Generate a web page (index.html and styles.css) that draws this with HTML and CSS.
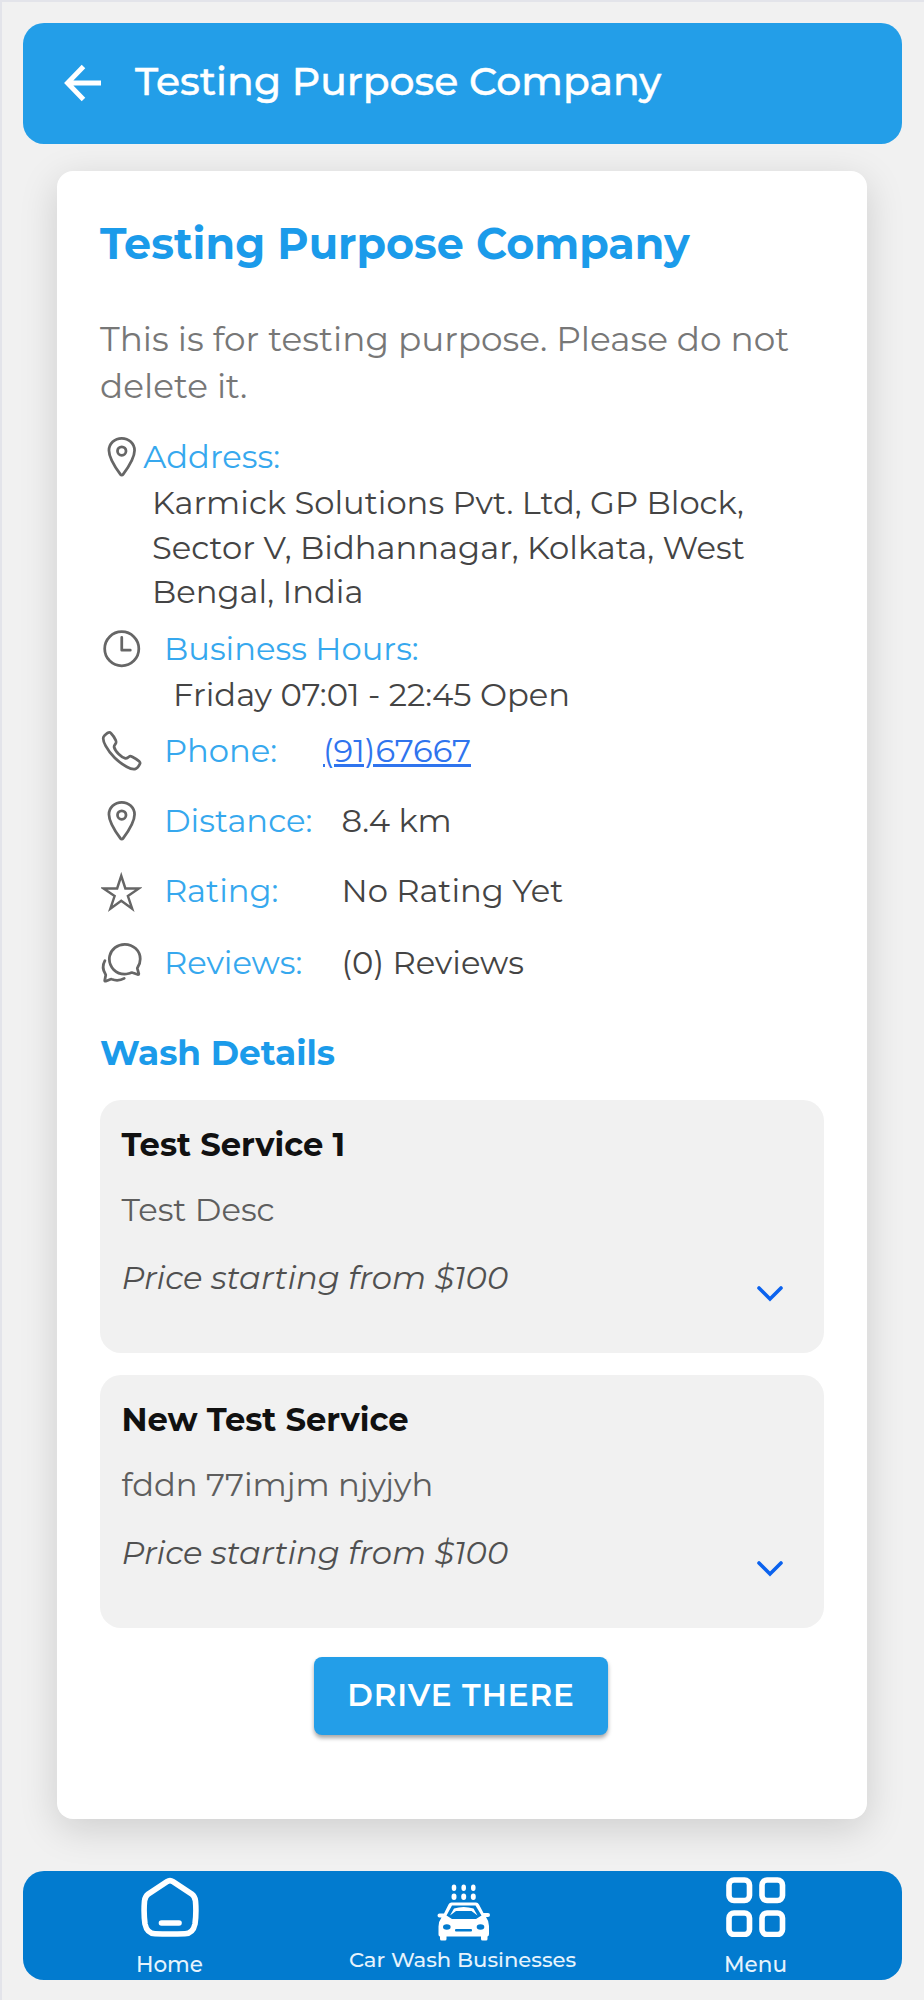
FILE: index.html
```html
<!DOCTYPE html>
<html lang="en">
<head>
<meta charset="utf-8">
<title>Testing Purpose Company</title>
<link rel="stylesheet" href="styles.css">
</head>
<body>
<div class="app">
  <header class="topbar">
    <svg class="back" viewBox="0 0 40 40"><path d="M20.500 3.500 4.500 20 20.500 36.500M4.500 20H38"/></svg>
    <span class="topbar-title">Testing Purpose Company</span>
  </header>

  <main class="card">
    <h1 class="name">Testing Purpose Company</h1>
    <p class="about">This is for testing purpose. Please do not<br>delete it.</p>

    <div class="row row-address">
      <svg class="icon" viewBox="0 0 512 512"><path d="M256 48c-79.500 0-144 61.390-144 137 0 87 96 224.870 131.250 272.490a15.770 15.770 0 0 0 25.500 0C304 409.890 400 272.070 400 185c0-75.610-64.500-137-144-137z"/><circle cx="256" cy="192" r="48"/></svg>
      <span class="label label-address">Address:</span>
    </div>
    <p class="address">Karmick Solutions Pvt. Ltd, GP Block,<br>Sector V, Bidhannagar, Kolkata, West<br>Bengal, India</p>

    <div class="row row-hours">
      <svg class="icon" viewBox="0 0 512 512"><circle cx="256" cy="256" r="192"/><path d="M256 128v144h96"/></svg>
      <span class="label">Business Hours:</span>
    </div>
    <p class="hours">Friday 07:01 - 22:45 Open</p>

    <div class="row row-phone">
      <svg class="icon" viewBox="0 0 512 512"><path d="M451 374c-15.880-16-54.340-39.350-73-48.760-24.300-12.240-26.300-13.240-45.400.95-12.740 9.470-21.210 17.930-36.120 14.750s-47.310-21.110-75.680-49.390-47.340-61.620-50.530-76.480 5.410-23.230 14.790-36c13.220-18 12.220-21 .92-45.300-8.810-18.900-32.840-57-48.900-72.800C119.900 44 119.900 47 108.830 51.600A160.150 160.150 0 0 0 83 65.370C67 76 58.120 84.830 51.910 98.100s-9 44.380 23.070 102.640 54.570 88.050 101.140 134.490S258.500 406.640 310.850 436c64.760 36.270 89.600 29.200 102.910 23s22.180-15 32.830-31a159.090 159.090 0 0 0 13.800-25.800C465 391.170 468 391.170 451 374z"/></svg>
      <span class="label label-phone">Phone:</span>
      <a class="tel" href="#">(91)67667</a>
    </div>
    <div class="row row-distance">
      <svg class="icon" viewBox="0 0 512 512"><path d="M256 48c-79.500 0-144 61.390-144 137 0 87 96 224.870 131.250 272.490a15.770 15.770 0 0 0 25.500 0C304 409.890 400 272.070 400 185c0-75.610-64.500-137-144-137z"/><circle cx="256" cy="192" r="48"/></svg>
      <span class="label label-distance">Distance:</span>
      <span class="value">8.4 km</span>
    </div>
    <div class="row row-rating">
      <svg class="icon icon-star" viewBox="0 0 512 512"><path d="M480 208H308L256 48l-52 160H32l140 96-54 160 138-100 138 100-54-160z"/></svg>
      <span class="label label-rating">Rating:</span>
      <span class="value">No Rating Yet</span>
    </div>
    <div class="row row-reviews">
      <svg class="icon" viewBox="0 0 512 512"><path d="M431 320.600c-1-3.600 1.200-8.600 3.300-12.200a33.680 33.680 0 0 1 2.100-3.100A162 162 0 0 0 464 215c.3-92.200-77.500-167-173.700-167-83.900 0-153.900 57.100-170.300 132.900a160.700 160.700 0 0 0-3.700 34.200c0 92.300 74.800 169.100 171 169.100 15.300 0 35.900-4.600 47.200-7.700s22.500-7.200 25.400-8.300a26.440 26.440 0 0 1 9.300-1.700 26 26 0 0 1 10.100 2l56.700 20.100a13.520 13.520 0 0 0 3.900 1 8 8 0 0 0 8-8 12.850 12.850 0 0 0-.5-2.700z"/><path d="M66.460 232a146.230 146.230 0 0 0 6.390 152.670c2.310 3.490 3.610 6.190 3.210 8s-11.930 61.870-11.930 61.870a8 8 0 0 0 2.710 7.680A8.170 8.170 0 0 0 72 464a7.260 7.260 0 0 0 2.910-.6l56.210-22a15.700 15.700 0 0 1 12 .2c18.940 7.380 39.880 12 60.830 12A159.210 159.210 0 0 0 284 432.110"/></svg>
      <span class="label label-reviews">Reviews:</span>
      <span class="value">(0) Reviews</span>
    </div>

    <h2 class="section">Wash Details</h2>
    <div class="services">
      <section class="service">
        <div class="service-text">
          <h3 class="service-name">Test Service 1</h3>
          <p class="service-desc">Test Desc</p>
          <p class="price">Price starting from $100</p>
        </div>
        <svg class="chevron" viewBox="0 0 28 18"><path d="M3 3l11 11L25 3"/></svg>
      </section>
      <section class="service">
        <div class="service-text">
          <h3 class="service-name">New Test Service</h3>
          <p class="service-desc">fddn 77imjm njyjyh</p>
          <p class="price">Price starting from $100</p>
        </div>
        <svg class="chevron" viewBox="0 0 28 18"><path d="M3 3l11 11L25 3"/></svg>
      </section>
    </div>
    <button class="drive">DRIVE THERE</button>
  </main>

  <nav class="tabs">
    <a class="tab">
      <svg class="tab-icon" viewBox="0 0 60 60"><path d="M27 4.600Q30 2.600 33 4.600L51.500 16.800Q55 19.400 55.500 24 56.500 36 55 47 53 56.500 45 56.800 30 57.300 15 56.800 7 56.500 5 47 3.500 36 4.500 24 5 19.400 8.500 16.800Z"/><path d="M21.500 46h17.500"/></svg>
      <span>Home</span>
    </a>
    <a class="tab">
      <svg class="car-icon" viewBox="0 0 54 58">
        <g class="solid">
          <ellipse cx="17" cy="3.800" rx="2.300" ry="3.200"/><ellipse cx="26.700" cy="3.800" rx="2.300" ry="3.200"/><ellipse cx="36.300" cy="3.800" rx="2.300" ry="3.200"/>
          <ellipse cx="17" cy="12.700" rx="2.500" ry="3.200"/><ellipse cx="26.700" cy="12.700" rx="2.500" ry="3.200"/><ellipse cx="36.300" cy="12.700" rx="2.500" ry="3.200"/>
          <path fill-rule="evenodd" d="M14.500 18.500H39q2 0 3 2l4.500 8.500h4.500q2 0 2 2t-2 2h-2q3 4 3 9v8q0 2-1.500 2.500V55q0 1.500-1.500 1.500h-3.500Q44 56.500 44 55v-2.500H9.500V55q0 1.500-1.500 1.500H4.500Q3 56.500 3 55v-2.500Q1.500 52.500 1.500 50.500v-8q0-5 3-9h-2q-2 0-2-2t2-2H7L11.500 20.500q1-2 3-2zM15 21.500 9.500 31.500 15 35H39l5.500-3.500L38.500 21.500z"/>
          <path d="M17 24.500q9.500-3 19.500 0l4 7-6-4.500H19l-6 4.500z"/>
        </g>
        <g class="hole"><ellipse cx="9.800" cy="43" rx="3.800" ry="2.800"/><ellipse cx="43.500" cy="43" rx="3.800" ry="2.800"/><rect x="18" y="45" width="17" height="2.500" rx="1"/></g>
      </svg>
      <span class="tab-long">Car Wash Businesses</span>
    </a>
    <a class="tab">
      <svg class="tab-icon" viewBox="0 0 60 60"><rect x="3" y="3" width="20.500" height="20.500" rx="5"/><rect x="36" y="3" width="20.500" height="20.500" rx="5"/><rect x="3" y="36" width="20.500" height="21.500" rx="5"/><rect x="36" y="36" width="20.500" height="21.500" rx="5"/></svg>
      <span>Menu</span>
    </a>
  </nav>
</div>
</body>
</html>
```
FILE: styles.css
```css
* { box-sizing: border-box; margin: 0; padding: 0; }
body { background: #f1f1f1; font-family: Montserrat, Inter, "Open Sans", sans-serif; font-size: 32.200px; color: #444; }
svg { display: block; flex: none; fill: none; stroke-linecap: round; stroke-linejoin: round; }
.app { width: 924px; height: 2000px; border-top: 2px solid #e3e4ea; border-left: 2px solid #e3e4ea; padding: 21px 22px 0 21px; overflow: hidden; white-space: nowrap; }

.topbar { height: 120.500px; border-radius: 21px; background: #239ee8; display: flex; align-items: center; padding: 0 0 4px 40px; color: #fff; position: relative; z-index: 1; }
.back { width: 40px; height: 40px; margin-top: 3px; stroke: #fff; stroke-width: 4.900; stroke-linecap: butt; stroke-linejoin: miter; }
.topbar-title { margin-left: 32px; font-size: 39.400px; font-weight: 500; line-height: 60px; -webkit-text-stroke: .4px #fff; }

.card { margin: 27px 35px 0 34px; height: 1648px; padding: 43px 43px 0; border-radius: 16px; background: #fff; box-shadow: 0 10px 38px rgba(0,0,0,.15); }
.name { font-size: 42.850px; line-height: 60px; font-weight: 700; color: #1b9bea; }
.about { margin-top: 42.500px; font-size: 34.300px; line-height: 47px; color: #777; }

.row { display: flex; align-items: center; height: 44px; line-height: 44px; }
.icon { width: 45.500px; height: 45.500px; margin-left: -1.200px; stroke: #666; stroke-width: 31; }
.icon-star { width: 40.500px; height: 40.500px; margin: 2px 2.500px 0 1.300px; stroke-linejoin: miter; }
.label { color: #36a8ee; margin-left: 19.700px; }
.row-address { margin-top: 25px; }
.label-address { margin-left: -1px; }
.address { margin: 2px 0 0 52px; line-height: 44.500px; }
.row-hours { margin-top: 12.500px; }
.hours { margin: 2px 0 0 73px; line-height: 44px; }
.row-phone { margin-top: 12px; }
.row-distance, .row-rating { margin-top: 26px; }
.row-reviews { margin-top: 28px; }
.label-phone { width: 159px; }
.label-distance, .label-rating, .label-reviews { width: 177.500px; }
.tel { color: #2f74ee; text-decoration: underline; text-decoration-thickness: 2.500px; text-underline-offset: 2px; }

.section { margin-top: 44px; font-size: 34.300px; line-height: 48px; font-weight: 700; color: #1b9bea; }
.services { display: flex; flex-direction: column; gap: 22px; margin-top: 22.500px; }
.service { height: 253px; border-radius: 21px; background: #f1f1f1; padding: 23px 40px 0 21.500px; display: flex; justify-content: space-between; }
.service-name, .service-desc, .price { font-size: 32.200px; line-height: 44px; }
.service-name { font-weight: 700; color: #111; }
.service-desc { margin-top: 21px; color: #5e5e5e; }
.price { margin-top: 24px; color: #505050; font-style: italic; }
.chevron { width: 28px; height: 18px; margin-top: 162px; stroke: #0b62ee; stroke-width: 3.600; stroke-linejoin: miter; }
.drive { display: block; margin: 29.500px auto 0; width: 294px; height: 78px; border: 0; border-radius: 8px; background: #239ee8; color: #fff; font: 600 31px/75px Montserrat, Inter, "Open Sans", sans-serif; letter-spacing: .95px; padding-bottom: 2px; box-shadow: 0 3px 4px rgba(0,0,0,.35); position: relative; left: -1px; }

.tabs { position: relative; z-index: 1; margin-top: 52px; height: 109.500px; border-radius: 21px; background: #027bcf; display: grid; grid-template-columns: 293px 293px 1fr; color: #e6f3fc; font-size: 21.500px; font-weight: 500; line-height: 30px; }
.tab { display: flex; flex-direction: column; align-items: center; }
.tab-icon { width: 60px; height: 60px; margin-top: 6px; stroke: #fff; stroke-width: 5.600; }
.tab-icon + span { margin-top: 12.500px; }
.car-icon { width: 54px; height: 58px; margin: 13px 0 0 2px; }
.tab-long { margin-top: 2px; font-size: 21.200px; }
.solid { fill: #fff; }
.hole { fill: #027bcf; }
```
